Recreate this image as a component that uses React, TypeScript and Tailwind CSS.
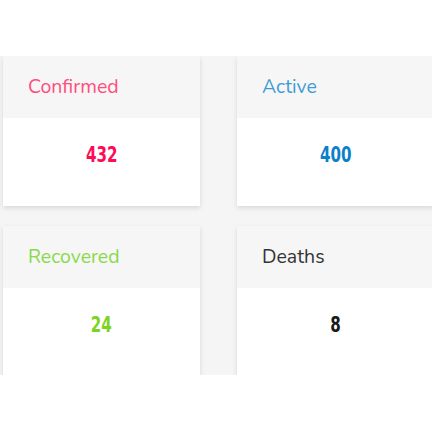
const stats = [
  { label: "Confirmed", value: "432", labelColor: "text-[#ff4d7d]", valueColor: "text-[#ff0a57]" },
  { label: "Active", value: "400", labelColor: "text-[#3d9bd6]", valueColor: "text-[#0c7fc9]" },
  { label: "Recovered", value: "24", labelColor: "text-[#8ad94c]", valueColor: "text-[#7ed321]" },
  { label: "Deaths", value: "8", labelColor: "text-[#333333]", valueColor: "text-[#1a1a1a]" },
]

export default function App() {
  return (
    <div className="h-[432px] w-[432px] overflow-hidden bg-white font-['Nunito','Lato',sans-serif]">
      <div className="h-[56px]" />
      <section className="h-[319px] overflow-hidden bg-[#f5f5f5] pl-[3px]">
        <div className="grid grid-cols-[197px_197px] gap-x-[37px] gap-y-[20px]">
          {stats.map((s) => (
            <div key={s.label} className="bg-white shadow-[0_2px_5px_rgba(0,0,0,0.12)]">
              <div className="flex h-[62px] items-center bg-[#f6f6f6] pl-[25px]">
                <span className={`text-[19.5px] ${s.labelColor}`}>{s.label}</span>
              </div>
              <div className="flex h-[88px] items-start justify-center pt-[27px]">
                <span
                  className={`inline-block scale-x-[0.8] font-['DejaVu_Sans_Condensed',sans-serif] text-[21px] font-bold leading-none ${s.valueColor}`}
                >
                  {s.value}
                </span>
              </div>
            </div>
          ))}
        </div>
      </section>
    </div>
  )
}
